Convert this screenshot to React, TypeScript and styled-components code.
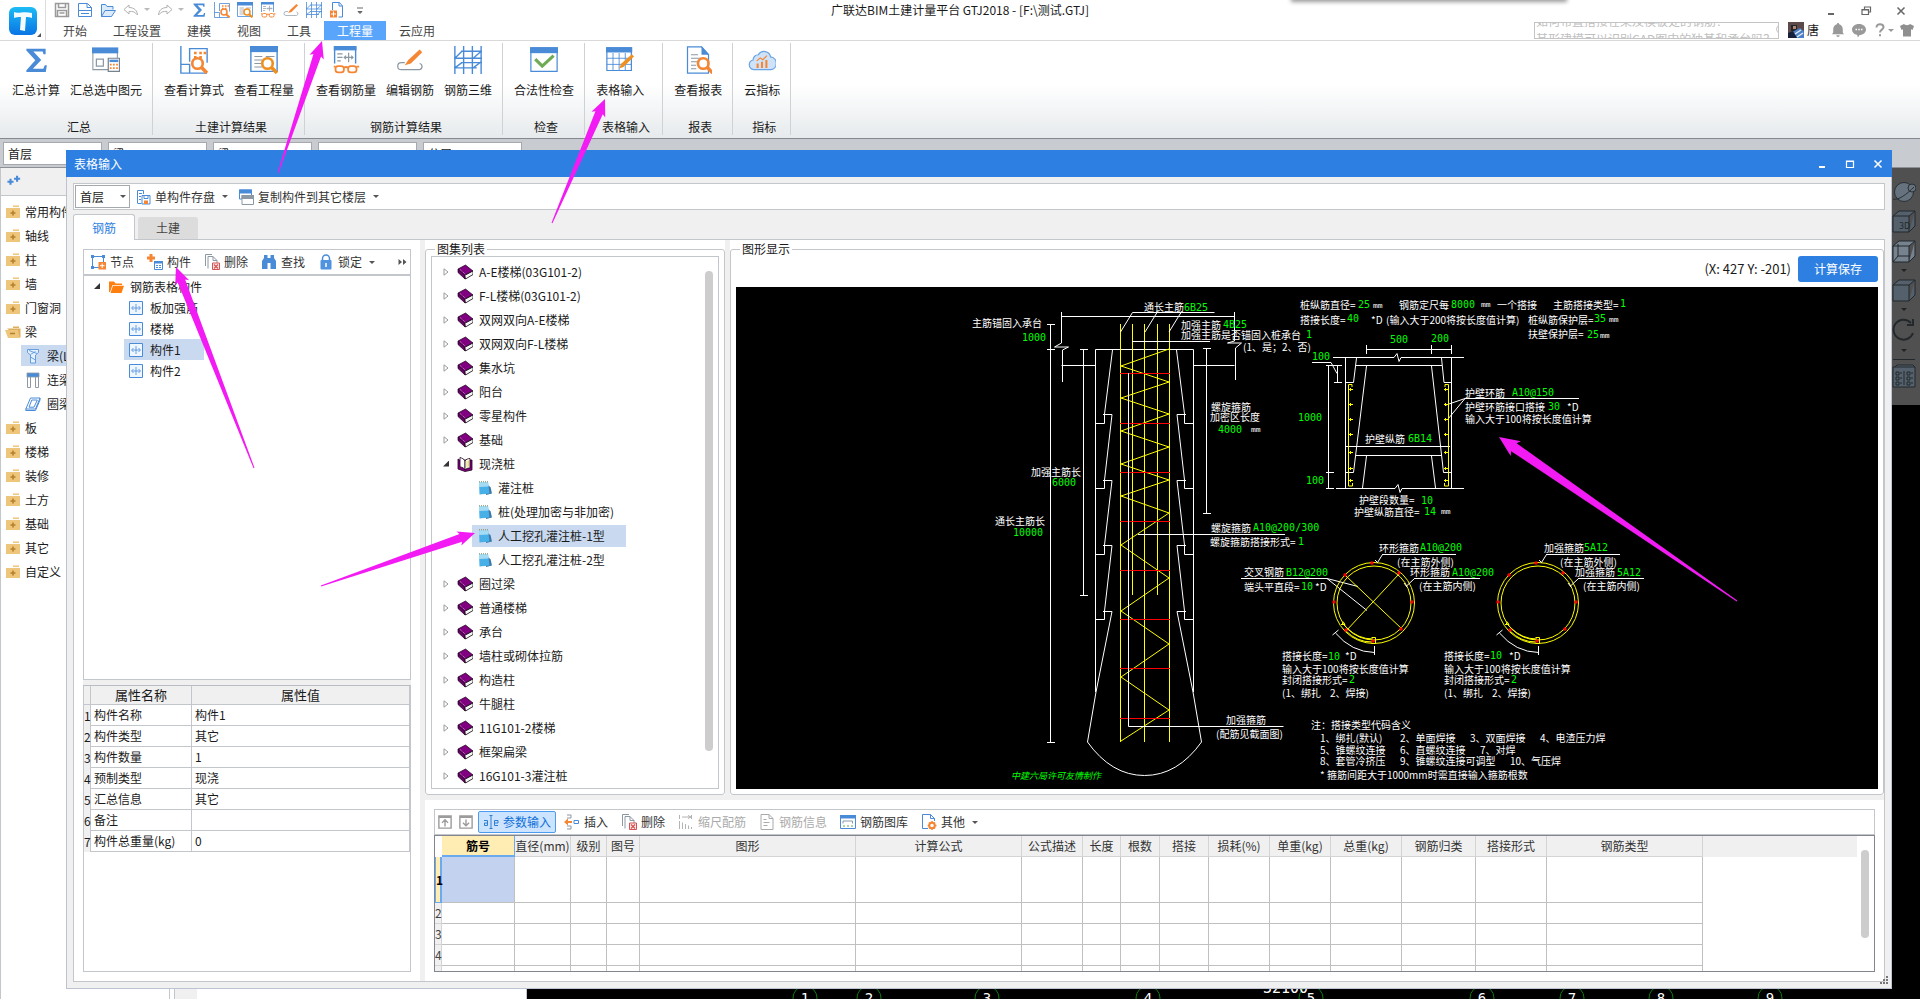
import React from "react";
import styled, { createGlobalStyle, css } from "styled-components";

const GlobalStyle = createGlobalStyle`
  *, *::before, *::after { box-sizing: border-box; }
  body { margin: 0; background: #fff; }
  body, button, input, select, table {
    font-family: "Noto Sans CJK SC", sans-serif;
    font-size: 12px;
    line-height: 18px;
    color: #1a1a1a;
  }
  button { border: 0; background: none; padding: 0; white-space: nowrap; cursor: default; }
  ul { list-style: none; margin: 0; padding: 0; }
  svg { display: block; flex: none; }
`;

const BLUE = "#4a8bd8";
const ORANGE = "#f58634";
const GREY = "#8c98a3";
const LINE = "#c3c6ca";

/* ---------- icons ---------- */

type IconName =
  | "save" | "doc" | "folderOpen" | "undo" | "redo" | "sigma" | "formula" | "quantity"
  | "rebarView" | "rebarEdit" | "mesh" | "plusDoc" | "more" | "sumSelected" | "check"
  | "sheetEdit" | "report" | "cloud" | "saveOne" | "copyLayer" | "node" | "component"
  | "delete" | "find" | "lock" | "chevrons" | "member" | "orangeFolder" | "up" | "down"
  | "textCursor" | "insert" | "scale" | "info" | "library" | "other" | "bell" | "chat"
  | "help" | "shirt" | "search" | "beam" | "linkBeam" | "ringBeam" | "closedFolder"
  | "openedFolder" | "book" | "openBook" | "note" | "min" | "max" | "restore" | "close"
  | "plusPlus";

const magnifier = (color: string) => (
  <>
    <circle cx="10" cy="10" r="3" fill="#fff" stroke={color} strokeWidth="1.5" />
    <path d="M12.2 12.2 15.4 15.4" stroke={color} strokeWidth="2" />
  </>
);

const glyphs: Record<IconName, React.ReactNode> = {
  save: <path d="M1.5 1.5h13v13h-13zM4.5 1.5v4h7v-4M3.5 14.5v-6h9v6M5.5 11h5" fill="none" stroke="#9a9a9a" strokeWidth="1.5" />,
  doc: <path d="M1.5 14.5v-13h9l4 4v9zM10 1.5v4h4.5M1.5 8.5h13M4 11.5h8" fill="none" stroke={BLUE} />,
  folderOpen: <path d="M1.5 14.5v-12h4l1.5 2h6v3M1.5 14.5l3.5-6h10.5l-4 6z" fill="#dcebfa" stroke={BLUE} />,
  undo: <path d="M6 3 1 7.5 6 12V9.5c4-.5 6 .5 8.5 3.500 0-4-3-7.5-8.5-7.5z" fill="none" stroke="#a0a0a0" />,
  redo: <path d="M10 3l5 4.5L10 12V9.5C6 9 4 10 1.5 13c0-4 3-7.5 8.5-7.5z" fill="none" stroke="#a0a0a0" />,
  sigma: <path d="M2.500 1.500h11v3.200h-1.200l-.5-1.500H6.500L11 8l-4.800 5h6l.8-2h1.200l-.6 3.800H2.500v-1L7.600 8.200 2.500 2.600z" fill={BLUE} />,
  formula: (
    <>
      <path d="M.5 0v15.500h15M5.500 9V1.500h10v8M.5 10.500h5v5" fill="none" stroke={BLUE} strokeWidth=".8" />
      <path d="M8 4h1.500M11 4h1.500M13.500 4H15M8 6.500h1.500M11 6.500h1.500" stroke={ORANGE} strokeWidth="1.500" />
      {magnifier(ORANGE)}
    </>
  ),
  quantity: (
    <>
      <path d="M.5.500h15v14H.5z" fill="#fff" stroke={BLUE} strokeWidth=".8" />
      <path d="M0 0h16v3.500H0z" fill={BLUE} />
      <path d="M2.500 6h4.500M2.500 8h4.500M2.500 10h4.500M2.500 12h4.500M9 6h5" stroke={GREY} strokeWidth=".7" />
      {magnifier("#ee9020")}
    </>
  ),
  rebarView: (
    <>
      <path d="M1.500 10V.500h12V10" fill="none" stroke={BLUE} strokeWidth=".8" />
      <path d="M1 0h13v2.500H1z" fill={BLUE} />
      <path d="M3 4.500h3M3 6.500h3M3 8.500h2M7 6.500h5M9.500 3.800v5.500M8 5.500l-1 1 1 1M11 5.500l1 1-1 1" stroke={GREY} strokeWidth=".7" fill="none" />
      <path d="M1 11.800h1M6.800 12.500q1.200-1 2.400 0M14 11.800h1.500" stroke={ORANGE} fill="none" />
      <rect x="2" y="11.500" width="4.800" height="3.500" rx="1.500" fill="none" stroke={ORANGE} />
      <rect x="9.200" y="11.500" width="4.800" height="3.500" rx="1.500" fill="none" stroke={ORANGE} />
    </>
  ),
  rebarEdit: (
    <>
      <path d="M5 9.500H3a2 2 0 0 0 0 4h10.500a1.800 1.800 0 0 0 0-3.500" fill="none" stroke={GREY} strokeWidth=".7" />
      <path d="M5 11 7 8l6.500-6L15 3.500 8.500 10z" fill={ORANGE} />
    </>
  ),
  mesh: <path d="M.5 0v16M5.500 0v16M10.500 0v16M15.500 0v16M0 7h16M0 12.500h13M4 3h12M4 9.500h12M.5 7l4-4M.5 12.500l4-3M11 7l4.500-4M11 12.500l4.500-3.500" fill="none" stroke={BLUE} strokeWidth=".8" />,
  plusDoc: (
    <>
      <path d="M3.500 8V.500h7l3 3.500v11h-4M10 .500V4h3.500" fill="none" stroke={BLUE} />
      <path d="M1 8.500h7v7H1z" fill={ORANGE} />
      <path d="M4.500 9.500v5M2 12h5" stroke="#fff" />
    </>
  ),
  more: <path d="M5 6h6M6 9.500h4l-2 2z" fill="#666" stroke="#666" />,
  sumSelected: (
    <>
      <path d="M.5 1.500h14v12H.5z" fill="#fff" stroke={GREY} strokeWidth=".6" />
      <path d="M0 .8h15v3.400H0z" fill={BLUE} />
      <path d="M2.500 7.500h4v4h-4z" fill="none" stroke={GREY} strokeWidth=".7" />
      <path d="M9.300 7h6.400v7.500H9.300z" fill="#fff" stroke="#76828d" strokeWidth=".7" />
      <path d="M10 7.800h5v1.400h-5z" fill={BLUE} />
      <path d="M10.200 10.700h4.800M10.200 12.700h4.800" stroke={ORANGE} strokeDasharray="1 .8" />
    </>
  ),
  check: (
    <>
      <path d="M.5 1h15v13.500H.5z" fill="#fff" stroke={BLUE} strokeWidth=".7" />
      <path d="M0 .7h16v3.400H0z" fill={BLUE} />
      <path d="M3 7.500l4 4 6.500-6" fill="none" stroke="#6fab54" strokeWidth="1.800" />
    </>
  ),
  sheetEdit: (
    <>
      <path d="M.5 1h14v13H.5z" fill="#fff" stroke={BLUE} strokeWidth=".7" />
      <path d="M0 .7h15v3H0z" fill={BLUE} />
      <path d="M.5 7h14M.5 10.500h14M4 4v10M7.500 4v10M11 4v10" stroke={BLUE} strokeWidth=".5" />
      <path d="M7.500 12.800 8.800 10l6-5.300 1.200 1.300L10 12z" fill="#ee9020" />
    </>
  ),
  report: (
    <>
      <path d="M2 .500h8l4 4.500v10.500H2z" fill="#fff" stroke={BLUE} strokeWidth=".7" />
      <path d="M10 0l4.500 5H10z" fill={BLUE} />
      <path d="M4 5h4M4 7h7M4 9h4M4 11h3M4 13h3" stroke={GREY} strokeWidth=".6" />
      <g transform="translate(1 0)">{magnifier(ORANGE)}</g>
    </>
  ),
  cloud: (
    <>
      <path d="M3.200 13.500a2.800 2.800 0 0 1-.3-5.500 3 3 0 0 1 3-3 3.800 3.800 0 0 1 7 1.200 3.700 3.700 0 0 1 .3 7.300z" fill="#cfe2f7" stroke="#6aa3e3" strokeWidth=".7" />
      <path d="M5.500 12.500V10M8 12.500V9M10.500 12.500V8" stroke={ORANGE} strokeWidth="1.200" />
      <path d="M5 8.500l2-1.700 1.500 1L10.800 5.500" fill="none" stroke={ORANGE} strokeWidth=".7" />
    </>
  ),
  saveOne: (
    <>
      <path d="M2.500 14V1.500h6V5M4 4.500h3M4 7.500h2M4 10.500h2M2.500 14.500h4" fill="none" stroke={BLUE} />
      <path d="M7 6.500h8v8.500H7zM9 6.500v3h4v-3" fill="#fff" stroke={BLUE} />
      <path d="M9 11.500h4V15H9z" fill={ORANGE} />
    </>
  ),
  copyLayer: (
    <>
      <path d="M1.500 1h12v9h-12z" fill="#fff" stroke={BLUE} />
      <path d="M1 .500h13v4H1z" fill={BLUE} />
      <path d="M4 6.500h11.500v9H4z" fill="#fff" stroke={GREY} />
      <path d="M3.500 6h12.500v4H3.500z" fill={GREY} />
    </>
  ),
  node: (
    <>
      <path d="M2.500 2.500h11v11h-11z" fill="none" stroke={BLUE} />
      <path d="M1 1h3v3H1zM12 1h3v3h-3zM1 12h3v3H1z" fill={BLUE} />
      <path d="M8.500 8h7.500v7.500H8.500z" fill={ORANGE} />
      <path d="M12.200 9.500v4.500M10 11.700h4.500" stroke="#fff" />
    </>
  ),
  component: (
    <>
      <path d="M4 0v8M0 4h8" stroke={ORANGE} strokeWidth="3" />
      <path d="M7.500 7.500h8v8h-8z" fill="#fff" stroke={BLUE} />
      <path d="M7 7h9v2.500H7z" fill={BLUE} />
      <path d="M9 11.500h5M9 13.500h5" stroke={BLUE} strokeDasharray="2 1" />
    </>
  ),
  delete: (
    <>
      <path d="M1.500 12V.500h6.500M4 14.500V2.500h5l4 4V9M9 2.500v4h4" fill="none" stroke={GREY} />
      <path d="M8.500 9h7v6.500h-7z" fill="#fbe9e9" stroke="#d65353" />
      <path d="M10 10.500l4 4M14 10.500l-4 4" stroke="#d65353" strokeWidth="1.200" />
    </>
  ),
  find: <path d="M3 1h3.500v3h3V1H13v3l2 3v8h-5.500V9h-3v6H1V7l2-3z" fill={BLUE} />,
  lock: (
    <>
      <path d="M4.500 7V4.500a3.500 3.500 0 0 1 7 0V7" fill="none" stroke={BLUE} strokeWidth="1.500" />
      <rect x="2.500" y="6" width="11" height="9.500" rx="1" fill="#4e92e0" />
      <path d="M8 9v4" stroke="#fff" strokeWidth="1.500" />
    </>
  ),
  chevrons: <path d="M4.500 5l3.500 3-3.500 3zM9 5l3.500 3L9 11z" fill="#555" />,
  member: (
    <>
      <path d="M1.500 1.500h13v13h-13z" fill="#eef6ff" stroke={BLUE} />
      <path d="M4 8h8M8 4v8M5.500 6l-2 2 2 2M10.500 6l2 2-2 2" stroke={BLUE} fill="none" strokeWidth=".8" />
    </>
  ),
  orangeFolder: <path d="M1 2.500h5l1.500 2H14V6H4.500L2 13H1zM5 6.800h11L13.500 14H2.500z" fill="#ff7f0e" />,
  up: <path d="M1 1h14v14H1zM1 2.500h14M8 13V6M4.500 9 8 5.500 11.500 9" fill="none" stroke="#9c9c9c" strokeWidth="1.600" />,
  down: <path d="M1 1h14v14H1zM1 2.500h14M8 5v7M4.500 8.800 8 12.300l3.500-3.500" fill="none" stroke="#9c9c9c" strokeWidth="1.600" />,
  textCursor: <path d="M6.500 1.500h3M6.500 14.500h3M8 1.500v13M1 6.500h3.500v5H1.500v-2.500h3M11.500 9h3.500V6.500h-3.500v5H15" fill="none" stroke="#2f7fd0" />,
  insert: (
    <>
      <path d="M3 1h4v3M3 15h4v-3M7 4H3M7 12H3" fill="none" stroke={GREY} />
      <path d="M0 8l4-3.500v2.500H8v2H4v2.500z" fill={ORANGE} />
      <path d="M10 6.500h4.500v3H10z" fill="none" stroke={BLUE} />
    </>
  ),
  scale: <path d="M1.500 1v4M13.500 1v4M4 3h9M10 1.500 13 3l-3 1.500M1.500 7v8M4.500 8.500V15M7.500 10v5M10.500 11.500V15M13.500 13v2" fill="none" stroke="#b4b4b4" />,
  info: <path d="M2 .500h8l4 4v11H2zM10 .500v4h4M4.500 5.500h3M4.500 8.500h6M4.500 11.500h4" fill="none" stroke="#aaa" />,
  library: (
    <>
      <path d="M.5 1.500h15v13H.5z" fill="#fff" stroke={BLUE} />
      <path d="M0 1h16v3.500H0z" fill={BLUE} />
      <path d="M3 9.500V7h9.500v2.500" fill="none" stroke={GREY} />
      <path d="M3 12h2M7 12h2M11 12h2" stroke="#5aa35a" />
    </>
  ),
  other: (
    <>
      <path d="M7 14.500H1.500V.500h8l4 4V7M9.500.500v4h4" fill="none" stroke={BLUE} />
      <circle cx="11" cy="11.500" r="2.800" fill="none" stroke={ORANGE} strokeWidth="2" />
      <path d="M11 7v1.500M11 14.500V16M6.700 11.500h1.500M14 11.500h1.500M8 8.500l1 1M13 13.500l1 1M14 8.500l-1 1M9 13.500l-1 1" stroke={ORANGE} strokeWidth="1.500" />
    </>
  ),
  bell: <path d="M8 1a1.200 1.200 0 0 1 1.200 1.200C11.700 2.800 12.800 5 12.800 7.500v3l1.200 1.800H2l1.200-1.800v-3C3.200 5 4.300 2.800 6.800 2.200A1.200 1.200 0 0 1 8 1zM6.300 13.300h3.400A1.700 1.700 0 0 1 6.300 13.300z" fill="#999" />,
  chat: (
    <>
      <path d="M8 2c4.200 0 7 2.500 7 5.500S12.200 13 8.500 13L7 15.500 6 12.800C3 12.300 1 10.200 1 7.500 1 4.500 3.800 2 8 2z" fill="#999" />
      <path d="M4.500 7.500h1.500M7.300 7.500h1.500M10 7.500h1.500" stroke="#fff" strokeWidth="1.400" />
    </>
  ),
  help: <path d="M4.500 5.500C4.500 3.300 6 2.200 8 2.200s3.500 1.200 3.500 3C11.500 7.500 8 7.800 8 10.500M8 12.300v2" fill="none" stroke="#999" strokeWidth="2" />,
  shirt: <path d="M5 2c1 1.500 5 1.500 6 0l4 2-1.500 4-1.500-.7V14.500H4V7.300L2.500 8 1 4z" fill="#8f8f8f" />,
  search: <path d="M6.500 2a4.500 4.500 0 1 1 0 9 4.500 4.500 0 0 1 0-9zM10 10l4.500 4.500" fill="none" stroke="#c4c4c4" strokeWidth="1.300" />,
  beam: <path d="M2.500 1.500h11v3L10.500 7v8h-5V7l-3-2.500zM4 2.500l8 3M5.500 9l5 3M5.500 6.500l5-3" fill="#e5f1fd" stroke={BLUE} strokeWidth=".8" />,
  linkBeam: (
    <>
      <path d="M2.500 5v10.500h3V5M10.500 5v10.500h3V5" fill="#fff" stroke={GREY} />
      <path d="M2 1h12v4H2z" fill={BLUE} stroke={GREY} strokeWidth=".8" />
    </>
  ),
  ringBeam: <path d="M5.500 2H15l-4.500 11H.8zM6.800 4h5.500L9 11.200H4zM.8 13v1.500h9.700L15 4V2" fill="none" stroke={BLUE} />,
  closedFolder: (
    <>
      <path d="M8 1.500h6V3H8zM1 4h14v10H1z" fill="#edc67c" />
      <path d="M8 6.500v5M5.500 9h5" stroke="#b5802a" strokeWidth="1.600" />
    </>
  ),
  openedFolder: (
    <>
      <path d="M8 2.500h6V4H8zM2 4.500h13.500v9H13z" fill="#dfae5c" />
      <path d="M0 6h13l1.500 8H3z" fill="#edc67c" />
      <path d="M5 9.500h5" stroke="#b5802a" strokeWidth="1.500" />
    </>
  ),
  book: (
    <>
      <path d="M8.500 1 1 5l6.500 6.500L16 7z" fill="#800080" stroke="#1a001a" strokeWidth=".7" />
      <path d="M7.500 11.500 16 7v3.500L8.500 15z" fill="#fff" stroke="#000" strokeWidth=".8" />
      <path d="M1 5v3.500L8 15v-3.500z" fill="#6a006a" stroke="#1a001a" strokeWidth=".7" />
      <path d="M3 5.500l6 5.300M9 12.800l6-3.200" stroke="#ddd" strokeWidth=".7" strokeDasharray="1 1" />
    </>
  ),
  openBook: (
    <>
      <path d="M1 3v10l7 2.500 7-1.500V4H2.500z" fill="#800080" stroke="#200020" strokeWidth=".8" />
      <path d="M8 14c-1-2-3-3-5-3V1.500C5 2 7 3 8 5z" fill="#fff" stroke="#200020" strokeWidth=".8" />
      <path d="M8 14c1-1.500 3-2 5-2V2.500c-2 0-4 .8-5 2.500z" fill="#fffbe0" stroke="#200020" strokeWidth=".8" />
      <path d="M10 5v6M11.500 4.500v6" stroke="#d8c860" strokeWidth=".7" />
    </>
  ),
  note: (
    <>
      <path d="M9 4l4.500 3 1.500 6.500L9 15z" fill="#3c78a8" />
      <path d="M2 2h9l1.500 11.500L2.500 14.500z" fill="#48b0e6" />
      <path d="M2 2h9l.5 4.500L2.200 7z" fill="#a5dcf5" />
      <path d="M2 1.800h9.500" stroke="#7a8a5a" strokeDasharray="1 1" />
    </>
  ),
  min: <path d="M5 11h6" stroke="currentColor" strokeWidth="2" />,
  max: <path d="M4.500 5h7v6.500h-7zM4 5.500h8" fill="none" stroke="currentColor" strokeWidth="1.200" />,
  restore: <path d="M6.500 6V4h6v5h-2M4 6.500h6.500v5H4zM4 7h6.500" fill="none" stroke="currentColor" strokeWidth="1.200" />,
  close: <path d="M4.500 4.500l7 7M11.500 4.500l-7 7" stroke="currentColor" strokeWidth="1.500" />,
  plusPlus: <path d="M4 6.500v7M.5 10h7M11.500 3v7M8 6.500h7" stroke={BLUE} strokeWidth="2.400" />,
};

const Icon = ({ name, size = 16 }: { name: IconName; size?: number }) => (
  <svg width={size} height={size} viewBox="0 0 16 16" aria-hidden="true">
    {glyphs[name]}
  </svg>
);

const Caret = styled.span<{ $tone?: string }>`
  flex: none;
  width: 0;
  height: 0;
  border: 3px solid transparent;
  border-top: 3px solid ${(p) => p.$tone || "#555"};
  border-bottom: 0;
`;

/* ---------- main window ---------- */

const Desktop = styled.div`
  position: relative;
  display: flex;
  flex-direction: column;
  min-height: 100vh;
  overflow: hidden;
  background: #fff;
`;

const Header = styled.header`
  position: relative;
  display: flex;
  height: 41px;
  border-bottom: 1px solid #d9d9d9;
`;

const LogoButton = styled.button`
  display: flex;
  align-items: center;
  width: 46px;
  padding: 4px 0 0 9px;
  border-right: 1px solid #dcdcdc;
`;

const HeaderMain = styled.div`
  display: flex;
  flex-direction: column;
  flex: 1;
`;

const QuickBar = styled.div`
  display: flex;
  align-items: center;
  gap: 7px;
  height: 22px;
  padding: 0 0 2px 8px;
`;

const QuickButton = styled.button<{ $faded?: boolean }>`
  display: flex;
  align-items: center;
  gap: 5px;
  opacity: ${(p) => (p.$faded ? 0.8 : 1)};
`;

const AppTitle = styled.h1`
  position: absolute;
  top: 0;
  left: 0;
  right: 0;
  margin: 0;
  font-size: 12px;
  font-weight: 400;
  line-height: 20px;
  text-align: center;
  pointer-events: none;
`;

const MenuTabs = styled.nav`
  display: flex;
  height: 19px;
  padding-left: 4px;
`;

const MenuTab = styled.button<{ $active?: boolean }>`
  padding: 0 13px;
  line-height: 19px;
  color: ${(p) => (p.$active ? "#fff" : "#444")};
  background: ${(p) => (p.$active ? "#59a5fb" : "none")};
`;

const HeaderSide = styled.div`
  display: flex;
  flex-direction: column;
  width: 386px;
`;

const WindowButtons = styled.div`
  display: flex;
  justify-content: flex-end;
  gap: 19px;
  height: 22px;
  padding-right: 11px;
  color: #666;
  button { color: inherit; }
`;

const UserRow = styled.div`
  display: flex;
  align-items: center;
  height: 16px;
`;

const SearchBox = styled.label`
  position: relative;
  display: flex;
  width: 245px;
  height: 17px;
  margin-right: 9px;
  padding-left: 1px;
  overflow: hidden;
  border: 1px solid #c4c4c4;
`;

const SearchInput = styled.input`
  position: absolute;
  inset: 0;
  width: 100%;
  border: 0;
  padding: 0;
  background: transparent;
`;

const SearchHints = styled.span`
  display: flex;
  flex: 1;
  flex-direction: column;
  justify-content: center;
  line-height: 18px;
  color: #c0c0c0;
  white-space: nowrap;
`;

const SearchGlyph = styled.span`
  padding: 1px 5px 0 0;
`;

const UserName = styled.span`
  margin: 0 11px 0 3px;
`;

const UserTools = styled.div`
  display: flex;
  flex: 1;
  align-items: center;
  justify-content: space-between;
  padding-right: 5px;
`;

const HelpButton = styled.button`
  display: flex;
  align-items: center;
`;

const TopShadow = styled.div`
  position: absolute;
  top: -6px;
  right: 354px;
  width: 274px;
  height: 6px;
  box-shadow: 0 1px 4px 1px #999;
`;

const Ribbon = styled.div`
  display: flex;
  height: 98px;
  padding-top: 2px;
  border-bottom: 1px solid #858a90;
  background: linear-gradient(#fff 45%, #e6eaec);
`;

const RibbonGroup = styled.section<{ $wide?: boolean }>`
  display: flex;
  flex-direction: column;
  justify-content: space-between;
  min-width: ${(p) => (p.$wide ? "78px" : "0")};
  margin-bottom: 3px;
  padding: 3px 10px 0 11px;
  border-right: 1px solid #cfd2d5;
  &:first-child { padding-left: 12px; }
`;

const RibbonButtons = styled.div`
  display: flex;
  gap: 10px;
`;

const RibbonButton = styled.button`
  display: flex;
  flex-direction: column;
  align-items: center;
  gap: 7px;
`;

const GroupCaption = styled.h2`
  margin: 0 0 0 4px;
  font-size: 12px;
  font-weight: 400;
  line-height: 16px;
  text-align: center;
`;

const ContextBar = styled.div`
  display: flex;
  gap: 6px;
  height: 29px;
  padding: 3px;
  border-bottom: 1px solid #8d9196;
  background: #c8cbd0;
`;

const ContextSelect = styled.select`
  appearance: none;
  width: 99px;
  height: 23px;
  padding: 0 4px;
  border: 1px solid #a5a8ac;
  border-radius: 0;
  background: #fff;
`;

const Workspace = styled.div`
  display: flex;
  flex: 1;
`;

const NavPanel = styled.aside`
  width: 170px;
  border: solid ${LINE};
  border-width: 0 1px;
`;

const NavHeader = styled.div`
  height: 28px;
  padding: 5px 6px;
  border-bottom: 1px solid ${LINE};
  background: #f0f0f0;
`;

const NavTree = styled.ul`
  padding-top: 3px;
`;

const NavItem = styled.li<{ $child?: boolean; $selected?: boolean }>`
  display: flex;
  align-items: center;
  height: 21px;
  margin: 2px 0 3px ${(p) => (p.$child ? "20px" : "0")};
  padding-left: 4px;
  gap: ${(p) => (p.$child ? "6px" : "4px")};
  background: ${(p) => (p.$selected ? "#c9d9ef" : "none")};
  white-space: nowrap;
`;

const SidePanel = styled.div`
  width: 353px;
  margin-left: 4px;
  border: solid ${LINE};
  border-width: 0 1px;
  background: linear-gradient(90deg, #f0f0f0 22px, #fff 22px);
`;

const Viewport = styled.div`
  display: flex;
  flex: 1;
  justify-content: space-between;
  overflow: hidden;
  background: #000;
`;

const AxisDrawing = styled.svg`
  align-self: flex-end;
  flex: 1;
  min-width: 0;
`;

const ViewTools = styled.div`
  display: flex;
  flex-direction: column;
  align-items: center;
  align-self: flex-start;
  gap: 6px;
  width: 36px;
  height: 237px;
  padding: 13px 0 0 4px;
  background: #505050;
`;

const ViewTool = styled.button`
  display: flex;
  flex-direction: column;
  align-items: center;
  gap: 6px;
`;

/* ---------- dialog ---------- */

const Dialog = styled.section`
  position: absolute;
  top: 150px;
  right: 28px;
  bottom: 10px;
  left: 66px;
  display: flex;
  flex-direction: column;
  border: 1px solid #bcc4d2;
  border-top: 0;
  background: #f0f0f0;
`;

const DialogTitle = styled.div`
  display: flex;
  align-items: center;
  justify-content: space-between;
  height: 27px;
  margin: 0 -1px;
  padding: 0 6px 0 8px;
  background: #2d80e2;
  color: #fff;
`;

const DialogButtons = styled.div`
  display: flex;
  gap: 12px;
  button { color: #fff; }
`;

const DialogBody = styled.div`
  display: flex;
  flex: 1;
  flex-direction: column;
  min-height: 0;
  padding: 6px;
`;

const DialogToolbar = styled.div`
  display: flex;
  align-items: center;
  height: 27px;
  padding: 0 1px;
  border: 1px solid ${LINE};
  background: #fff;
`;

const FloorBox = styled.div`
  position: relative;
  display: flex;
  align-items: center;
  ${Caret} { position: absolute; right: 4px; pointer-events: none; }
`;

const FloorSelect = styled.select`
  appearance: none;
  width: 55px;
  height: 23px;
  padding: 0 4px;
  border: 1px solid #a5a8ac;
  border-radius: 0;
  background: #fff;
`;

const ToolButton = styled.button<{ $active?: boolean; $disabled?: boolean; $compact?: boolean }>`
  display: flex;
  align-items: center;
  gap: 4px;
  height: 22px;
  padding: 0 ${(p) => (p.$compact ? "1px" : "4px")};
  color: ${(p) => (p.$disabled ? "#aaa" : p.$active ? "#1170d8" : "#333")};
  border: 1px solid ${(p) => (p.$active ? "#4b9bf0" : "transparent")};
  border-radius: 2px;
  background: ${(p) => (p.$active ? "#cce4ff" : "none")};
  ${Caret} { margin-left: 3px; }
`;

const Tabs = styled.div`
  display: flex;
  align-items: flex-end;
  gap: 3px;
  height: 29px;
`;

const Tab = styled.button<{ $active?: boolean }>`
  width: ${(p) => (p.$active ? "62px" : "60px")};
  height: ${(p) => (p.$active ? "26px" : "22px")};
  border-radius: 3px 3px 0 0;
  ${(p) =>
    p.$active
      ? css`
          position: relative;
          margin-bottom: -1px;
          border: 1px solid ${LINE};
          border-bottom: 0;
          background: #fff;
          color: #2d80e2;
        `
      : css`
          background: #dcdcdc;
          color: #444;
        `}
`;

const TabPanel = styled.div`
  display: flex;
  flex: 1;
  min-height: 0;
  border: 1px solid ${LINE};
  background: #fff;
`;

const LeftPane = styled.div`
  display: flex;
  flex-direction: column;
  width: 346px;
  padding: 9px;
`;

const VSplitter = styled.div`
  width: 5px;
  background: #f0f0f0;
`;

const HSplitter = styled.div`
  height: 5px;
  background: #f0f0f0;
`;

const MemberBox = styled.div`
  display: flex;
  flex: 1;
  flex-direction: column;
  border: 1px solid ${LINE};
`;

const MemberToolbar = styled.div`
  display: flex;
  align-items: center;
  justify-content: space-between;
  height: 26px;
  padding-left: 1px;
  border-bottom: 2px solid ${LINE};
`;

const MemberTools = styled.div`
  display: flex;
  gap: 3px;
`;

const MemberRow = styled.li<{ $level: number; $selected?: boolean }>`
  display: flex;
  align-items: center;
  gap: 6px;
  width: fit-content;
  height: 21px;
  margin-left: ${(p) => (p.$level ? "40px" : "10px")};
  padding: 0 23px 0 ${(p) => (p.$level ? "4px" : "0")};
  background: ${(p) => (p.$selected ? "#c9d9ef" : "none")};
`;

const Expanded = styled.span`
  width: 8px;
  height: 7px;
  background: #333;
  clip-path: polygon(6px 0, 6px 6px, 0 6px);
`;

const PropertyBox = styled.div`
  height: 287px;
  border: 1px solid ${LINE};
  border-top-color: #b9bdc3;
`;

const PropertyTable = styled.table`
  width: 100%;
  table-layout: fixed;
  border-collapse: separate;
  border-spacing: 0;
  th, td {
    height: 21px;
    padding: 0 0 0 3px;
    border: solid ${LINE};
    border-width: 0 1px 1px 0;
    line-height: 18px;
    text-align: left;
    font-weight: 400;
    white-space: nowrap;
  }
  thead th {
    height: 19px;
    padding: 0;
    background: #f0f0f0;
    font-size: 13px;
    text-align: center;
  }
  tbody th {
    padding: 0;
    background: #f0f0f0;
    border-bottom: 0;
  }
`;

const RightPane = styled.div`
  display: flex;
  flex: 1;
  flex-direction: column;
  min-width: 0;
`;

const UpperRow = styled.div`
  display: flex;
  flex: 1;
  min-height: 0;
`;

const GroupBox = styled.fieldset<{ $width?: number }>`
  display: flex;
  flex-direction: column;
  ${(p) => (p.$width ? `width: ${p.$width}px;` : "flex: 1;")}
  min-width: 0;
  margin: 2px 0 0;
  padding: 0 5px 5px;
  border: 1px solid ${LINE};
  border-radius: 3px;
`;

const Legend = styled.legend`
  margin-left: 4px;
  padding: 0 2px;
  line-height: 14px;
`;

const AtlasList = styled.div`
  position: relative;
  flex: 1;
  min-height: 0;
  padding-top: 3px;
  overflow: hidden;
  border: 1px solid ${LINE};
`;

const AtlasRow = styled.li<{ $child?: boolean; $selected?: boolean }>`
  display: flex;
  align-items: center;
  gap: ${(p) => (p.$child ? "5px" : "6px")};
  width: fit-content;
  height: 22px;
  margin: 1px 0 2px ${(p) => (p.$child ? "40px" : "11px")};
  padding: 0 21px 0 ${(p) => (p.$child ? "5px" : "0")};
  background: ${(p) => (p.$selected ? "#c9d9ef" : "none")};
`;

const AtlasMarker = styled.span`
  display: flex;
  width: 8px;
`;

const ScrollThumb = styled.div<{ $height: number }>`
  position: absolute;
  top: 14px;
  right: 5px;
  width: 8px;
  height: ${(p) => p.$height}px;
  border-radius: 4px;
  background: #cdcdcd;
`;

const CanvasBar = styled.div`
  display: flex;
  align-items: center;
  justify-content: flex-end;
  gap: 7px;
  height: 25px;
  margin-bottom: 6px;
  font-size: 13px;
`;

const PrimaryButton = styled.button`
  width: 80px;
  height: 26px;
  border-radius: 3px;
  background: #2d80e2;
  color: #fff;
`;

const CanvasFrame = styled.div`
  flex: 1;
  min-height: 0;
  overflow: hidden;
  background: #000;
`;

const LowerPane = styled.div`
  display: flex;
  flex-direction: column;
  height: 181px;
  padding: 9px;
`;

const RebarToolbar = styled.div`
  display: flex;
  align-items: center;
  gap: 3px;
  height: 26px;
  padding-left: 1px;
  border: 1px solid ${LINE};
`;

const RebarGrid = styled.div`
  position: relative;
  flex: 1;
  overflow: hidden;
  border: 1px solid #84868f;
`;

const RebarTable = styled.table`
  width: calc(100% - 17px);
  table-layout: fixed;
  border-collapse: separate;
  border-spacing: 0;
  th, td {
    height: 21px;
    padding: 0;
    border: solid #c0c0c0;
    border-width: 0 1px 1px 0;
    font-weight: 400;
    line-height: 18px;
    white-space: nowrap;
  }
  thead th { background: #f0f0f0; color: #333; border-color: #d4d4d4; }
  tbody th { background: #f0f0f0; color: #444; border-color: #d4d4d4; text-align: left; }
  th:last-child, td:last-child { border: 0; }
  thead th:first-child { background: #fff; border: 0; }
  thead th:nth-child(2) {
    background: #ffedb4;
    color: #000;
    font-weight: 700;
    border-color: #6aaaf0;
    border-bottom-width: 2px;
  }
  tbody tr:first-child th {
    background: #ffedb4;
    border: solid #6aaaf0;
    border-width: 0 2px 1px 1px;
    color: #000;
    font-weight: 700;
  }
  tbody tr:first-child td { height: 46px; }
  tbody tr:first-child td:nth-child(2) { background: #c2d2ef; }
`;

const SizeGrip = styled.svg`
  position: absolute;
  right: 2px;
  bottom: 3px;
`;

/* ---------- pile drawing ---------- */

const Cad = styled.svg`
  width: 100%;
  height: 100%;
  text {
    font-family: "Noto Sans CJK SC", sans-serif;
    font-size: 10px;
    fill: #fff;
    white-space: pre;
  }
  text.value {
    font-family: "DejaVu Sans Mono", monospace;
    fill: #0f0;
  }
  text.unit {
    font-family: "Liberation Mono", monospace;
    font-size: 8px;
  }
  text.credit { fill: #0f0; font-size: 9px; font-style: italic; }
  path, circle { fill: none; stroke: #fff; stroke-width: 1; }
  .rebar { stroke: #ff0; }
  .hoop { stroke: #f00; }
  .dot { fill: #f00; stroke: none; }
`;

type Note = [number, number, string];

const labels: Note[] = [
  [972, 323, "主筋锚固入承台"], [1144, 307, "通长主筋"], [1181, 325, "加强主筋"],
  [1181, 335, "加强主筋是否锚固入桩承台"], [1243, 347, "(1、是；2、否)"],
  [1211, 407, "螺旋箍筋"], [1210, 417, "加密区长度"], [1031, 472, "加强主筋长"],
  [995, 521, "通长主筋长"], [1211, 528, "螺旋箍筋"], [1210, 542, "螺旋箍筋搭接形式="],
  [1244, 572, "交叉钢筋"], [1244, 587, "端头平直段="], [1315, 587, "*D"],
  [1226, 720, "加强箍筋"], [1216, 734, "(配筋见截面图)"],
  [1300, 305, "桩纵筋直径="], [1399, 305, "钢筋定尺每"], [1497, 305, "一个搭接"],
  [1553, 305, "主筋搭接类型="], [1300, 320, "搭接长度="], [1371, 320, "*D"],
  [1386, 320, "(输入大于200将按长度值计算)"], [1528, 320, "桩纵筋保护层="],
  [1528, 334, "扶壁保护层="], [1465, 393, "护壁环筋"], [1465, 407, "护壁环筋接口搭接"],
  [1567, 407, "*D"], [1465, 419, "输入大于100将按长度值计算"], [1365, 439, "护壁纵筋"],
  [1359, 500, "护壁段数量="], [1354, 512, "护壁纵筋直径="],
  [1379, 548, "环形箍筋"], [1397, 562, "(在主筋外侧)"], [1410, 572, "环形箍筋"], [1419, 586, "(在主筋内侧)"],
  [1544, 548, "加强箍筋"], [1560, 562, "(在主筋外侧)"], [1575, 572, "加强箍筋"], [1583, 586, "(在主筋内侧)"],
  [1282, 656, "搭接长度="], [1345, 656, "*D"], [1282, 669, "输入大于100将按长度值计算"],
  [1282, 680, "封闭搭接形式="], [1282, 693, "(1、绑扎    2、焊接)"],
  [1444, 656, "搭接长度="], [1509, 656, "*D"], [1444, 669, "输入大于100将按长度值计算"],
  [1444, 680, "封闭搭接形式="], [1444, 693, "(1、绑扎    2、焊接)"],
  [1311, 725, "注：搭接类型代码含义"],
  [1320, 738, "1、绑扎(默认)"], [1400, 738, "2、单面焊接"], [1470, 738, "3、双面焊接"], [1540, 738, "4、电渣压力焊"],
  [1320, 750, "5、锥螺纹连接"], [1400, 750, "6、直螺纹连接"], [1480, 750, "7、对焊"],
  [1320, 761, "8、套管冷挤压"], [1400, 761, "9、锥螺纹连接可调型"], [1510, 761, "10、气压焊"],
  [1320, 775, "* 箍筋间距大于1000mm时需直接输入箍筋根数"],
];

const values: Note[] = [
  [1022, 337, "1000"], [1184, 307, "6B25"], [1223, 324, "4B25"], [1306, 334, "1"],
  [1218, 429, "4000"], [1052, 482, "6000"], [1013, 532, "10000"], [1253, 527, "A10@200/300"],
  [1298, 541, "1"], [1286, 572, "B12@200"], [1301, 586, "10"], [1358, 304, "25"],
  [1451, 304, "8000"], [1620, 303, "1"], [1347, 318, "40"], [1594, 318, "35"], [1587, 334, "25"],
  [1390, 339, "500"], [1431, 338, "200"], [1312, 356, "100"], [1298, 417, "1000"], [1306, 480, "100"],
  [1512, 392, "A10@150"], [1548, 406, "30"], [1408, 438, "6B14"], [1421, 500, "10"], [1424, 511, "14"],
  [1420, 547, "A10@200"], [1452, 572, "A10@200"], [1584, 547, "5A12"], [1617, 572, "5A12"],
  [1328, 656, "10"], [1349, 679, "2"], [1490, 655, "10"], [1511, 679, "2"],
];

const units: Note[] = [
  [1251, 430, "mm"], [1373, 306, "mm"], [1481, 305, "mm"], [1609, 320, "mm"], [1600, 336, "mm"], [1441, 512, "mm"],
];

const linerStep = "M1112.500 350 1104.500 414v9.500H1096M1103 414.500h9L1104.500 480v8.500H1096M1103 480.500h9L1104.500 545v9.500H1096M1103 545.500h9L1104.500 611v8.500H1096M1103 611.500h9L1096 692 1087.500 742";
const tieDots = [389, 404, 419, 434, 452, 468, 480];
const hoopDots: [number, number][] = [[1372, 563], [1345, 575], [1399, 573], [1334, 602], [1412, 602], [1346, 630], [1401, 629], [1373, 641]];

const Hoop = ({ shift }: { shift: number }) => (
  <g transform={`translate(${shift} 0)`}>
    <circle className="rebar" cx="1374" cy="603" r="40.500" />
    <circle className="rebar" cx="1374" cy="603" r="37" />
    <path className="rebar" d="M1346 631q11 11 26 11M1347 628q11 11 26 11M1371.500 637.500h4v6h-4M1342 623l4 4M1341 624.500h4l-2-3" />
    <path d="M1335.500 633q16 19 39 19.500M1374.500 646v9M1332.500 635l6-5M1382.500 554.500l-5 8M1375 560l3 3M1414.500 578.500l-8 7.500M1404 583l3 4" />
    {hoopDots.map(([x, y]) => (
      <circle key={`${x}-${y}`} className="dot" cx={x} cy={y} r="1.700" />
    ))}
  </g>
);

const PileDrawing = () => (
  <Cad viewBox="736 287 1142 502" preserveAspectRatio="xMinYMin meet" role="img" aria-label="人工挖孔灌注桩-1型">
    {/* overall dimensions and pile cap */}
    <path d="M1050.500 324v418M1047 324.500h8M1047 349.500h8M1047 742.500h8M1083.500 349v246M1080 349.500h8M1080 595.500h8" />
    <path d="M1061.500 316.500h173M1061.500 312v31l-7 4h14l-6 3v32M1234.500 312v29l-7 2h14l-6 5v32M1061.500 365.500h34M1193.500 365.500h41" />
    {/* pile shaft, liner steps and bell bottom */}
    <path d="M1095.500 692V349.500h98V692" />
    <path d={linerStep} />
    <path d={linerStep} transform="translate(2289 0) scale(-1 1)" />
    <path d="M1087.500 742q24 33.500 57 33.500t57-33.500" />
    {/* main bars and spiral */}
    <path className="rebar" d="M1120.500 324v418M1132.500 324v271M1144.500 324v418M1157.500 324v271M1169.500 324v418" />
    <path
      className="rebar"
      d="M1169 349 1121 366 1169 382 1121 398 1169 414 1121 431 1169 447 1121 464 1169 480 1121 496 1169 513 1121 545 1169 578 1121 611 1169 644 1121 677 1169 710 1121 741"
    />
    <path className="hoop" d="M1120 373.500h50M1120 423.500h50M1120 472.500h50M1120 521.500h50M1120 570.500h50M1120 619.500h50M1120 668.500h50M1120 718.500h50" />
    {/* leaders */}
    <path d="M1128.500 373v353.500h155M1120.500 332l12-19.500h82M1145 332l12-19.500M1169 332l12-19.500M1132 341.500h78M1206.500 348v165.500M1203 348.500h8M1203 513.500h8M1138 534.500h147" />
    <path d="M1241 578.500h86l31 8M1327 578.500l40 32" />
    <path d="M1382 554.500h74M1414 578.500h66M1546 554.500h74M1578 578.500h66" />
    {/* wall section */}
    <path d="M1366 349.500h85.500M1366.500 345v9M1431.500 345v9M1451.500 345v9" />
    <path d="M1333 357.500h61l3-4 2 8 2-4h63M1336 488.500h59l3-4 2 8 2-4h62" />
    <path d="M1345.500 357v131M1451.500 357v131M1356.500 358l-3 24.500h-8M1441.500 358l2.500 24.500h7.500M1356 365.500h86" />
    <path d="M1366.500 366l-13 106.500h-8M1431.500 366l12 106.500h8M1356 455.500h86M1366.500 456l-4 32M1431.500 456l4 32M1346 446.500h104" />
    <path d="M1328.500 365v123.500M1326 365.500h16M1326 472.500h8M1326 488.500h8M1337.500 366v16M1334 382.500h8M1312 362.500h19l6 11" />
    <path d="M1446 405l19-6.500h114M1448 419l17-20.500" />
    <path className="rebar" d="M1352 387v-2.500h-3.500v101.500h4v-3M1445 387v-2.500h3.500v101.500h-4v-3" />
    {tieDots.map((y) => (
      <path key={y} className="rebar" d={`M1349 ${y}.5h4M1350.500 ${y - 1}v3M1444 ${y}.5h4M1445.500 ${y - 1}v3`} />
    ))}
    {/* hoop sections */}
    <path className="rebar" d="M1346 576l56 53M1399 574l-53 57" />
    <Hoop shift={0} />
    <Hoop shift={164} />
    {labels.map(([x, y, t]) => <text key={`${x}-${y}`} x={x} y={y + 4}>{t}</text>)}
    {values.map(([x, y, t]) => <text key={`${x}-${y}`} className="value" x={x} y={y + 4}>{t}</text>)}
    {units.map(([x, y, t]) => <text key={`${x}-${y}`} className="unit" x={x} y={y + 2}>{t}</text>)}
    <text className="credit" x="1011" y="779">中建六局许可友情制作</text>
  </Cad>
);

/* ---------- callout arrows ---------- */

const ArrowLayer = styled.svg`
  position: absolute;
  inset: 0;
  width: 100%;
  height: 100%;
  pointer-events: none;
`;

const arrows: [number, number, number, number, number][] = [
  [322, 41, 278, 173, 1],
  [605, 99, 552, 223, 1],
  [176, 267, 254, 468, 1],
  [475, 533, 321, 586, 1],
  [1499, 437, 1737, 601, 1.2],
];

const arrowPath = ([tx, ty, ex, ey, k]: number[]) => {
  const len = Math.hypot(ex - tx, ey - ty);
  const ux = (ex - tx) / len;
  const uy = (ey - ty) / len;
  const at = (d: number, w: number) => `${tx + ux * d - uy * w} ${ty + uy * d + ux * w}`;
  return `M${at(0, 0)}L${at(17 * k, 7.5 * k)}L${at(15 * k, 4 * k)}L${at(len, 0.5)}L${at(len, -0.5)}L${at(15 * k, -4 * k)}L${at(17 * k, -7.5 * k)}Z`;
};

/* ---------- data ---------- */

const quickIcons: IconName[] = ["sigma", "formula", "quantity", "rebarView", "rebarEdit", "mesh", "plusDoc", "more"];
const menuTabs = ["开始", "工程设置", "建模", "视图", "工具", "工程量", "云应用"];

const ribbon: { caption: string; wide?: boolean; items: [IconName, string][] }[] = [
  { caption: "汇总", items: [["sigma", "汇总计算"], ["sumSelected", "汇总选中图元"]] },
  { caption: "土建计算结果", items: [["formula", "查看计算式"], ["quantity", "查看工程量"]] },
  { caption: "钢筋计算结果", items: [["rebarView", "查看钢筋量"], ["rebarEdit", "编辑钢筋"], ["mesh", "钢筋三维"]] },
  { caption: "检查", items: [["check", "合法性检查"]] },
  { caption: "表格输入", wide: true, items: [["sheetEdit", "表格输入"]] },
  { caption: "报表", items: [["report", "查看报表"]] },
  { caption: "指标", items: [["cloud", "云指标"]] },
];

const navItems: { text: string; icon?: IconName; child?: boolean; selected?: boolean }[] = [
  { text: "常用构件类型" }, { text: "轴线" }, { text: "柱" }, { text: "墙" }, { text: "门窗洞" },
  { text: "梁", icon: "openedFolder" },
  { text: "梁(L)", icon: "beam", child: true, selected: true },
  { text: "连梁(G)", icon: "linkBeam", child: true },
  { text: "圈梁(E)", icon: "ringBeam", child: true },
  { text: "板" }, { text: "楼梯" }, { text: "装修" }, { text: "土方" }, { text: "基础" }, { text: "其它" }, { text: "自定义" },
];

const members = ["板加强筋", "楼梯", "构件1", "构件2"];

const properties = [
  ["构件名称", "构件1"], ["构件类型", "其它"], ["构件数量", "1"], ["预制类型", "现浇"],
  ["汇总信息", "其它"], ["备注", ""], ["构件总重量(kg)", "0"],
];

const atlas: { text: string; kind?: "open" | "leaf"; selected?: boolean }[] = [
  { text: "A-E楼梯(03G101-2)" }, { text: "F-L楼梯(03G101-2)" }, { text: "双网双向A-E楼梯" }, { text: "双网双向F-L楼梯" },
  { text: "集水坑" }, { text: "阳台" }, { text: "零星构件" }, { text: "基础" },
  { text: "现浇桩", kind: "open" },
  { text: "灌注桩", kind: "leaf" }, { text: "桩(处理加密与非加密)", kind: "leaf" },
  { text: "人工挖孔灌注桩-1型", kind: "leaf", selected: true }, { text: "人工挖孔灌注桩-2型", kind: "leaf" },
  { text: "圈过梁" }, { text: "普通楼梯" }, { text: "承台" }, { text: "墙柱或砌体拉筋" }, { text: "构造柱" },
  { text: "牛腿柱" }, { text: "11G101-2楼梯" }, { text: "框架扁梁" }, { text: "16G101-3灌注桩" },
];

const columns: [string, number][] = [
  ["筋号", 73], ["直径(mm)", 56], ["级别", 36], ["图号", 33], ["图形", 216], ["计算公式", 166], ["公式描述", 61],
  ["长度", 38], ["根数", 39], ["搭接", 49], ["损耗(%)", 61], ["单重(kg)", 61], ["总重(kg)", 71],
  ["钢筋归类", 74], ["搭接形式", 71], ["钢筋类型", 156],
];

const axes: [number, string][] = [
  [278, "1"], [342, "2"], [460, "3"], [621, "4"], [784, "5"], [955, "6"], [1045, "7"], [1134, "8"], [1243, "9"],
];

const cubeLines = "M1 7h16v16H1zM1 7l6-5h16l-6 5M17 23l6-6V2";

export default function App() {
  return (
    <Desktop>
      <GlobalStyle />
      <Header>
        <LogoButton aria-label="应用菜单">
          <svg width="34" height="34" viewBox="0 0 34 34">
            <defs>
              <linearGradient id="logo" x1="0" y1="0" x2="0" y2="1">
                <stop offset="0" stopColor="#1cbcf6" />
                <stop offset="1" stopColor="#0a74e4" />
              </linearGradient>
            </defs>
            <rect y="2" width="28" height="28" rx="6" fill="url(#logo)" />
            <path d="M5 7c4 2 9-1 18 1v5c-2-1-4-1-6-1l-1 14-5-1 1-13c-3 0-5 0-7 1z" fill="#f4fbff" />
            <path d="M32 28v4h-4z" fill="#555" />
          </svg>
        </LogoButton>
        <HeaderMain>
          <QuickBar>
            <QuickButton aria-label="保存"><Icon name="save" /></QuickButton>
            <QuickButton aria-label="新建"><Icon name="doc" /></QuickButton>
            <QuickButton aria-label="打开"><Icon name="folderOpen" /></QuickButton>
            <QuickButton aria-label="撤销" $faded><Icon name="undo" /><Caret $tone="#aaa" /></QuickButton>
            <QuickButton aria-label="恢复" $faded><Icon name="redo" /><Caret $tone="#aaa" /></QuickButton>
            {quickIcons.map((n) => (
              <QuickButton key={n} aria-label={n}><Icon name={n} /></QuickButton>
            ))}
          </QuickBar>
          <MenuTabs>
            {menuTabs.map((t) => <MenuTab key={t} $active={t === "工程量"}>{t}</MenuTab>)}
          </MenuTabs>
        </HeaderMain>
        <AppTitle>广联达BIM土建计量平台 GTJ2018 - [F:\测试.GTJ]</AppTitle>
        <TopShadow />
        <HeaderSide>
          <WindowButtons>
            <button aria-label="最小化"><Icon name="min" /></button>
            <button aria-label="还原"><Icon name="restore" /></button>
            <button aria-label="关闭"><Icon name="close" /></button>
          </WindowButtons>
          <UserRow>
            <SearchBox>
              <SearchHints>
                <span>如何布置搭接在梁及模板处的钢筋？</span>
                <span>其形建模可以识别CAD图中的独基和承台吗？</span>
              </SearchHints>
              <SearchGlyph><Icon name="search" size={13} /></SearchGlyph>
              <SearchInput aria-label="搜索" />
            </SearchBox>
            <svg width="16" height="16" viewBox="0 0 16 16">
              <path d="M0 0h16v16H0z" fill="#5d4a48" />
              <path d="M3 3h6v6H3z" fill="#20242c" />
              <path d="M5 4h3v3H5z" fill="#b0846e" />
              <path d="M4 10l8-4 4 3v7H4z" fill="#4c7fc4" />
              <path d="M0 11l5-2 4 7H0z" fill="#16203a" />
              <path d="M7 12l6-4M9 15l6-4" stroke="#dfe9f5" strokeWidth="1.500" />
            </svg>
            <UserName>唐</UserName>
            <UserTools>
              <button aria-label="通知"><Icon name="bell" /></button>
              <button aria-label="消息"><Icon name="chat" /></button>
              <HelpButton aria-label="帮助"><Icon name="help" /><Caret $tone="#999" /></HelpButton>
              <button aria-label="皮肤"><Icon name="shirt" /></button>
            </UserTools>
          </UserRow>
        </HeaderSide>
      </Header>

      <Ribbon>
        {ribbon.map((g) => (
          <RibbonGroup key={g.caption} $wide={g.wide}>
            <RibbonButtons>
              {g.items.map(([icon, text]) => (
                <RibbonButton key={text}>
                  <Icon name={icon} size={28} />
                  {text}
                </RibbonButton>
              ))}
            </RibbonButtons>
            <GroupCaption>{g.caption}</GroupCaption>
          </RibbonGroup>
        ))}
      </Ribbon>

      <ContextBar>
        {["首层", "梁", "梁 ", "KL-1", "分层1"].map((t) => (
          <ContextSelect key={t} aria-label={t}><option>{t}</option></ContextSelect>
        ))}
      </ContextBar>

      <Workspace>
        <NavPanel>
          <NavHeader><Icon name="plusPlus" size={14} /></NavHeader>
          <NavTree>
            {navItems.map((n) => (
              <NavItem key={n.text} $child={n.child} $selected={n.selected}>
                <Icon name={n.icon || "closedFolder"} />{n.text}
              </NavItem>
            ))}
          </NavTree>
        </NavPanel>
        <SidePanel />
        <Viewport>
          <AxisDrawing height="30" overflow="hidden">
            {axes.map(([x, n]) => (
              <g key={n}>
                <circle cx={x} cy="29" r="12" fill="none" stroke="#0a7d0a" />
                <text x={x} y="34" textAnchor="middle" fill="#fff" fontSize="14" fontFamily="DejaVu Sans Mono, monospace">{n}</text>
              </g>
            ))}
            <text x="736" y="24" fill="#fff" fontSize="15" fontFamily="DejaVu Sans Mono, monospace">32100</text>
          </AxisDrawing>
          <ViewTools>
            <ViewTool aria-label="动态观察">
              <svg width="24" height="22" viewBox="0 0 24 22" fill="#66727d" stroke="#2a2f34">
                <circle cx="12" cy="11" r="9.500" /><circle cx="20" cy="7" r="4" /><path d="M1 18C6 20 15 13 22 6" fill="none" />
              </svg>
            </ViewTool>
            <ViewTool aria-label="三维">
              <svg width="24" height="24" viewBox="0 0 24 24" fill="#54606b" stroke="#23282c">
                <path d={cubeLines} />
                <text x="7" y="20" fontSize="8" fill="#23282c" stroke="none" fontFamily="DejaVu Sans, sans-serif">3D</text>
              </svg>
            </ViewTool>
            <ViewTool aria-label="线框">
              <svg width="24" height="24" viewBox="0 0 24 24" fill="#76828e" stroke="#23282c">
                <path d={cubeLines} /><path d="M6 5v12h12M6 17l-5 6" fill="none" />
              </svg>
              <Caret $tone="#222" />
            </ViewTool>
            <ViewTool aria-label="实体">
              <svg width="24" height="24" viewBox="0 0 24 24" fill="#54606b" stroke="#23282c"><path d={cubeLines} /></svg>
              <Caret $tone="#222" />
            </ViewTool>
            <ViewTool aria-label="旋转">
              <svg width="24" height="26" viewBox="0 0 24 26" fill="none" stroke="#23282c" strokeWidth="2">
                <path d="M21 16a10 10 0 1 1-2-10M21 2v6h-6" />
              </svg>
              <Caret $tone="#222" />
            </ViewTool>
            <ViewTool aria-label="显示设置">
              <svg width="24" height="30" viewBox="0 0 24 30" fill="none" stroke="#23282c">
                <path d="M1 1.500h22" /><path d="M1 9h22v20H1zM3 9l2-2h16l2 2" fill="#54606b" />
                <path d="M4 14h3v3H4zM4 19h3v3H4zM4 24h3v3H4zM15 14h3v3h-3zM15 19h3v3h-3zM15 24h3v3h-3zM8 15h2M19 15h2M8 20h2M19 20h2M8 25h2M19 25h2M12 13v14" />
              </svg>
            </ViewTool>
          </ViewTools>
        </Viewport>
      </Workspace>

      <Dialog role="dialog" aria-label="表格输入">
        <DialogTitle>
          表格输入
          <DialogButtons>
            <button aria-label="最小化"><Icon name="min" /></button>
            <button aria-label="最大化"><Icon name="max" /></button>
            <button aria-label="关闭"><Icon name="close" /></button>
          </DialogButtons>
        </DialogTitle>
        <DialogBody>
          <DialogToolbar>
            <FloorBox>
              <FloorSelect aria-label="楼层"><option>首层</option></FloorSelect>
              <Caret />
            </FloorBox>
            <ToolButton><Icon name="saveOne" />单构件存盘<Caret /></ToolButton>
            <ToolButton><Icon name="copyLayer" />复制构件到其它楼层<Caret /></ToolButton>
          </DialogToolbar>
          <Tabs>
            <Tab $active>钢筋</Tab>
            <Tab>土建</Tab>
          </Tabs>
          <TabPanel>
            <LeftPane>
              <MemberBox>
                <MemberToolbar>
                  <MemberTools>
                    <ToolButton><Icon name="node" />节点</ToolButton>
                    <ToolButton><Icon name="component" />构件</ToolButton>
                    <ToolButton><Icon name="delete" />删除</ToolButton>
                    <ToolButton><Icon name="find" />查找</ToolButton>
                    <ToolButton><Icon name="lock" />锁定<Caret /></ToolButton>
                  </MemberTools>
                  <button aria-label="更多"><Icon name="chevrons" /></button>
                </MemberToolbar>
                <ul>
                  <MemberRow $level={0}><Expanded /><Icon name="orangeFolder" />钢筋表格构件</MemberRow>
                  {members.map((m) => (
                    <MemberRow key={m} $level={1} $selected={m === "构件1"}><Icon name="member" />{m}</MemberRow>
                  ))}
                </ul>
              </MemberBox>
              <HSplitter />
              <PropertyBox>
                <PropertyTable>
                  <colgroup><col width="7" /><col width="101" /><col /></colgroup>
                  <thead><tr><th /><th>属性名称</th><th>属性值</th></tr></thead>
                  <tbody>
                    {properties.map(([k, v], i) => (
                      <tr key={k}><th>{i + 1}</th><td>{k}</td><td>{v}</td></tr>
                    ))}
                  </tbody>
                </PropertyTable>
              </PropertyBox>
            </LeftPane>
            <VSplitter />
            <RightPane>
              <UpperRow>
                <GroupBox $width={300}>
                  <Legend>图集列表</Legend>
                  <AtlasList>
                    <ul>
                      {atlas.map((a) =>
                        a.kind === "leaf" ? (
                          <AtlasRow key={a.text} $child $selected={a.selected}><Icon name="note" />{a.text}</AtlasRow>
                        ) : (
                          <AtlasRow key={a.text}>
                            <AtlasMarker>
                              {a.kind === "open" ? (
                                <Expanded />
                              ) : (
                                <svg width="6" height="8" viewBox="0 0 6 8"><path d="M1 .8 5 4 1 7.200z" fill="#fff" stroke="#999" /></svg>
                              )}
                            </AtlasMarker>
                            <Icon name={a.kind === "open" ? "openBook" : "book"} />
                            {a.text}
                          </AtlasRow>
                        )
                      )}
                    </ul>
                    <ScrollThumb $height={480} />
                  </AtlasList>
                </GroupBox>
                <VSplitter />
                <GroupBox>
                  <Legend>图形显示</Legend>
                  <CanvasBar>
                    <span>(X: 427 Y: -201)</span>
                    <PrimaryButton>计算保存</PrimaryButton>
                  </CanvasBar>
                  <CanvasFrame><PileDrawing /></CanvasFrame>
                </GroupBox>
              </UpperRow>
              <HSplitter />
              <LowerPane>
                <RebarToolbar>
                  <ToolButton $compact aria-label="上移"><Icon name="up" size={14} /></ToolButton>
                  <ToolButton $compact aria-label="下移"><Icon name="down" size={14} /></ToolButton>
                  <ToolButton $active><Icon name="textCursor" />参数输入</ToolButton>
                  <ToolButton><Icon name="insert" />插入</ToolButton>
                  <ToolButton><Icon name="delete" />删除</ToolButton>
                  <ToolButton $disabled><Icon name="scale" />缩尺配筋</ToolButton>
                  <ToolButton $disabled><Icon name="info" />钢筋信息</ToolButton>
                  <ToolButton><Icon name="library" />钢筋图库</ToolButton>
                  <ToolButton><Icon name="other" />其他<Caret /></ToolButton>
                </RebarToolbar>
                <RebarGrid>
                  <RebarTable>
                    <colgroup>
                      <col width="7" />
                      {columns.map(([c, w]) => <col key={c} width={w} />)}
                      <col />
                    </colgroup>
                    <thead>
                      <tr><th />{columns.map(([c]) => <th key={c}>{c}</th>)}<th /></tr>
                    </thead>
                    <tbody>
                      {["1", "2", "3", "4", ""].map((n) => (
                        <tr key={n}><th>{n}</th>{columns.map(([c]) => <td key={c} />)}<td /></tr>
                      ))}
                    </tbody>
                  </RebarTable>
                  <ScrollThumb $height={88} />
                </RebarGrid>
              </LowerPane>
            </RightPane>
          </TabPanel>
        </DialogBody>
        <SizeGrip width="9" height="9" viewBox="0 0 9 9">
          <path d="M6 0h2v2H6zM3 3h2v2H3zM6 3h2v2H6zM0 6h2v2H0zM3 6h2v2H3zM6 6h2v2H6z" fill="#777" />
        </SizeGrip>
      </Dialog>

      <ArrowLayer>
        {arrows.map((a) => <path key={a[0]} d={arrowPath(a)} fill="#f31bf3" />)}
      </ArrowLayer>
    </Desktop>
  );
}
